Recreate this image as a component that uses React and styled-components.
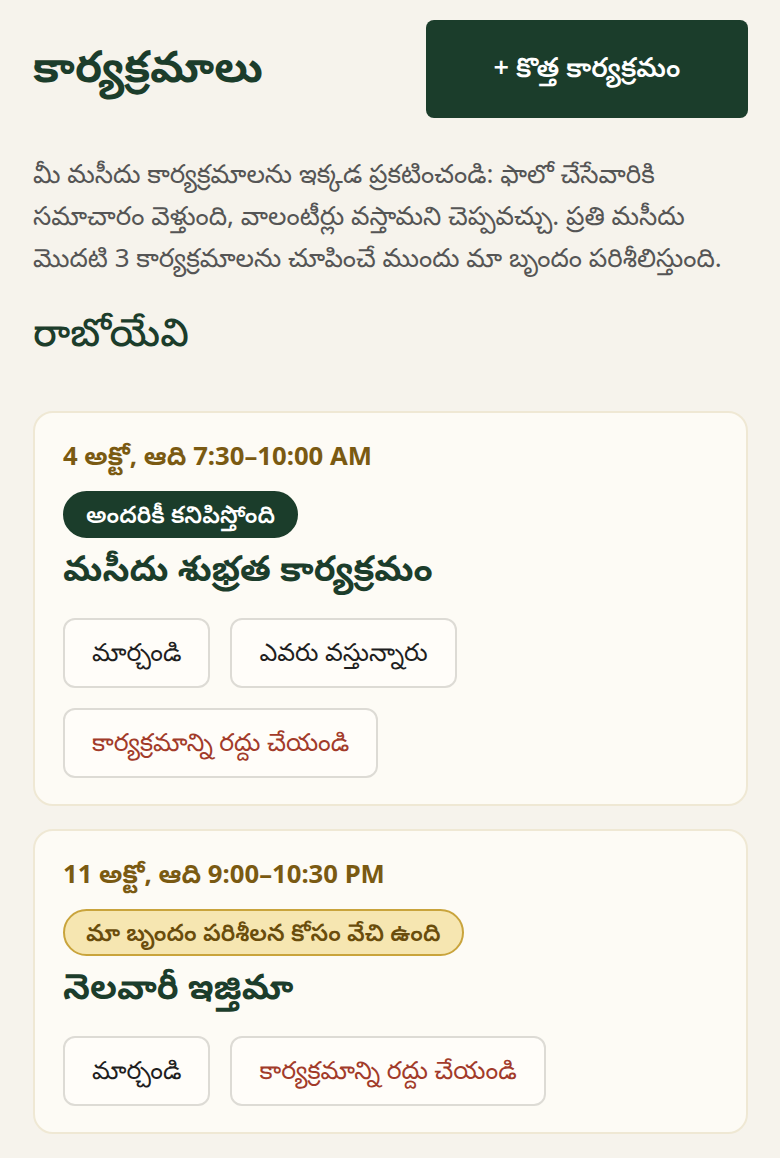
import React from 'react'
import styled, { createGlobalStyle } from 'styled-components'

const GlobalStyle = createGlobalStyle`
  html, body {
    margin: 0;
    padding: 0;
    background: #f6f3ec;
  }

  body {
    font-family: 'Noto Sans', 'Noto Sans Telugu', sans-serif;
    color: #2a2a2a;
  }
`

const Page = styled.div`
  padding: 20px 32px 24px 33px;
`

const Header = styled.header`
  display: flex;
  justify-content: space-between;
  align-items: center;
`

const Title = styled.h1`
  margin: 0 0 8px;
  font-size: 43.5px;
  line-height: 60px;
  font-weight: 700;
  color: #1c3d2b;
`

const NewButton = styled.button`
  width: 322px;
  height: 98px;
  border: 0;
  border-radius: 8px;
  background: #1b3d2b;
  color: #fff;
  font-family: inherit;
  font-size: 27px;
  font-weight: 600;
  cursor: pointer;
`

const Intro = styled.p`
  margin: 34px 0 0;
  font-size: 26px;
  line-height: 42px;
  color: #555;
`

const SectionTitle = styled.h2`
  margin: 28px 0 55px;
  font-size: 39px;
  line-height: 50px;
  font-weight: 500;
  color: #1c3d2b;
`

const List = styled.div`
  display: flex;
  flex-direction: column;
  gap: 23px;
`

const Card = styled.article`
  display: flex;
  flex-direction: column;
  align-items: flex-start;
  background: #fdfbf5;
  border: 2px solid #efe8d4;
  border-radius: 20px;
  padding: 26px 28px 26px;
`

const When = styled.div`
  font-size: 25.7px;
  line-height: 34px;
  font-weight: 700;
  color: #7a5a12;
`

const Badge = styled.span`
  margin-top: 18px;
  padding: 6px 21px;
  line-height: 31px;
  border-radius: 999px;
  font-size: 23.7px;
  font-weight: 600;
  background: ${p => (p.$tone === 'pending' ? '#f6e6b1' : '#1b3d2b')};
  color: ${p => (p.$tone === 'pending' ? '#6a4d0c' : '#fff')};
  border: 2px solid ${p => (p.$tone === 'pending' ? '#c9a43c' : '#1b3d2b')};
`

const EventName = styled.h3`
  margin: 8px 0 0;
  font-size: 35px;
  line-height: 44px;
  font-weight: 700;
  color: #1c3d2b;
`

const Actions = styled.div`
  display: flex;
  flex-wrap: wrap;
  gap: 20px;
  margin-top: 28px;
`

const Action = styled.button`
  height: 70px;
  padding: 0 27px;
  border: 2px solid #dddbd5;
  border-radius: 12px;
  background: #fffdf9;
  font-family: inherit;
  font-size: 25px;
  color: ${p => (p.$danger ? '#a23b2a' : '#1f1f1f')};
  cursor: pointer;
`

const events = [
  {
    when: '4 అక్టో, ఆది 7:30–10:00 AM',
    status: 'public',
    statusText: 'అందరికీ కనిపిస్తోంది',
    name: 'మసీదు శుభ్రత కార్యక్రమం',
    actions: ['మార్చండి', 'ఎవరు వస్తున్నారు'],
  },
  {
    when: '11 అక్టో, ఆది 9:00–10:30 PM',
    status: 'pending',
    statusText: 'మా బృందం పరిశీలన కోసం వేచి ఉంది',
    name: 'నెలవారీ ఇజ్తిమా',
    actions: ['మార్చండి'],
  },
]

export default function App() {
  return (
    <Page>
      <GlobalStyle />
      <Header>
        <Title>కార్యక్రమాలు</Title>
        <NewButton>+ కొత్త కార్యక్రమం</NewButton>
      </Header>
      <Intro>
        మీ మసీదు కార్యక్రమాలను ఇక్కడ ప్రకటించండి: ఫాలో చేసేవారికి సమాచారం వెళ్తుంది, వాలంటీర్లు వస్తామని
        చెప్పవచ్చు. ప్రతి మసీదు మొదటి 3 కార్యక్రమాలను చూపించే ముందు మా బృందం పరిశీలిస్తుంది.
      </Intro>
      <SectionTitle>రాబోయేవి</SectionTitle>
      <List>
        {events.map((ev, idx) => (
          <Card key={idx}>
            <When>{ev.when}</When>
            <Badge $tone={ev.status}>{ev.statusText}</Badge>
            <EventName>{ev.name}</EventName>
            <Actions>
              {ev.actions.map(a => (
                <Action key={a}>{a}</Action>
              ))}
              <Action $danger>కార్యక్రమాన్ని రద్దు చేయండి</Action>
            </Actions>
          </Card>
        ))}
      </List>
    </Page>
  )
}
